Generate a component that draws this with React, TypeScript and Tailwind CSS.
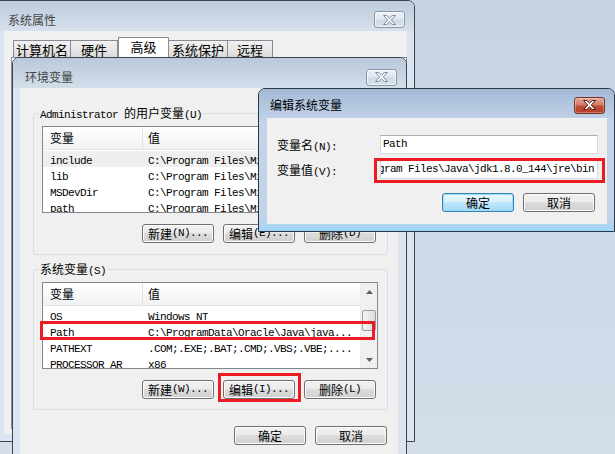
import React from "react";

const CJK_RE = /([\u3000-\u9fff\uff00-\uffef]+)/;

// mixed text: CJK glyphs at 12px, ASCII in a 6px-advance mono like SimSun
function T({ text }: { text: string }) {
  const parts = text.split(CJK_RE).filter((p) => p !== "");
  return (
    <>
      {parts.map((p, i) =>
        CJK_RE.test(p) ? (
          <span key={i} className="font-['Noto_Sans_CJK_SC',sans-serif] text-[12px]">
            {p}
          </span>
        ) : (
          <span key={i} className="whitespace-pre font-['Liberation_Mono',monospace] text-[11px] tracking-[-0.6px]">
            {p}
          </span>
        )
      )}
    </>
  );
}

function XGlyph({ active }: { active?: boolean }) {
  return (
    <svg width="13" height="10" viewBox="0 0 13 10" aria-hidden="true">
      <path
        d="M0.5 0.5h3.2l2.8 2.6 2.8-2.6h3.2l-4.2 4.5 4.2 4.5h-3.2l-2.8-2.6-2.8 2.6H0.5l4.2-4.5z"
        fill={active ? "#ffffff" : "#f3f6fa"}
        stroke={active ? "#4b1a12" : "#7d8da3"}
        strokeWidth="1"
        strokeLinejoin="round"
      />
    </svg>
  );
}

function CloseBtn({ active }: { active?: boolean }) {
  return (
    <div
      className={
        active
          ? "flex h-[17px] w-[31px] items-center justify-center rounded-[3px] border border-[#7a3328] bg-[linear-gradient(#e6a797,#d27c68_45%,#c24b34_55%,#b83f28)] shadow-[inset_0_0_0_1px_rgba(255,255,255,0.3)]"
          : "flex h-[17px] w-[31px] items-center justify-center rounded-[3px] border border-[#8997ab] bg-[linear-gradient(#eef2f7,#e0e7ef_45%,#d0dae6_55%,#d9e2ec)] shadow-[inset_0_0_0_1px_rgba(255,255,255,0.6)]"
      }
    >
      <XGlyph active={active} />
    </div>
  );
}

function Btn({ label, primary }: { label: string; primary?: boolean }) {
  return (
    <div
      className={
        primary
          ? "flex h-[19px] w-[72px] items-center justify-center rounded-[3px] border border-[#3c7fb1] bg-[linear-gradient(#eaf6fd,#d9f0fc_49%,#bee6fd_50%,#a7d9f5)] leading-none text-black shadow-[inset_0_0_0_1px_#8fe0f8]"
          : "flex h-[19px] w-[72px] items-center justify-center rounded-[3px] border border-[#707070] bg-[linear-gradient(#f2f2f2,#ebebeb_49%,#dddddd_50%,#cfcfcf)] leading-none text-black shadow-[inset_0_0_0_1px_#fcfcfc]"
      }
    >
      <T text={label} />
    </div>
  );
}

function ScrollBar() {
  return (
    <div className="flex w-[17px] shrink-0 flex-col border-l border-[#ececec] bg-[#f0f0f0]">
      <div className="flex h-[17px] items-center justify-center">
        <svg width="7" height="4" viewBox="0 0 7 4" aria-hidden="true">
          <path d="M3.5 0L7 4H0z" fill="#606060" />
        </svg>
      </div>
      <div className="flex-1 pt-[10px]">
        <div className="mx-[1px] h-[21px] rounded-[2px] border border-[#9b9b9b] bg-linear-to-r from-[#f4f4f4] to-[#dcdcdc]" />
      </div>
      <div className="flex h-[17px] items-center justify-center">
        <svg width="7" height="4" viewBox="0 0 7 4" aria-hidden="true">
          <path d="M0 0H7L3.5 4z" fill="#606060" />
        </svg>
      </div>
    </div>
  );
}

function ListView({ rows, firstSel, scroll }: { rows: [string, string][]; firstSel?: boolean; scroll?: boolean }) {
  return (
    <div className="flex h-[87px] w-[336px] overflow-hidden border border-[#828790] bg-white text-black">
      <div className="min-w-0 flex-1">
        <div className="flex h-[23px] items-center border-b border-[#e5e5e5] bg-linear-to-b from-white to-[#f1f2f4] font-['Noto_Sans_CJK_SC',sans-serif] text-[12px]">
          <div className="flex h-full w-[100px] items-center border-r border-[#e3e3e3] pl-[7px]">变量</div>
          <div className="pl-[5px]">值</div>
        </div>
        <div className="pt-[1px]">
          {rows.map(([n, v], i) => (
            <div
              key={n}
              className={
                firstSel && i === 0
                  ? "flex h-[16px] items-center whitespace-nowrap bg-[#efefef] leading-[16px]"
                  : "flex h-[16px] items-center whitespace-nowrap leading-[16px]"
              }
            >
              <div className="w-[105px] shrink-0 pl-[7px]">
                <T text={n} />
              </div>
              <div className="overflow-hidden">
                <T text={v} />
              </div>
            </div>
          ))}
        </div>
      </div>
      {scroll && <ScrollBar />}
    </div>
  );
}

function Group({ label, children, className }: { label: string; children: React.ReactNode; className: string }) {
  return (
    <div className={className}>
      <div className="absolute left-[5px] top-[-10px] whitespace-nowrap bg-[#f0f0f0] px-[1px] leading-[16px] text-black">
        <T text={label} />
      </div>
      {children}
    </div>
  );
}

const userVars: [string, string][] = [
  ["include", "C:\\Program Files\\Microsoft Visual Studio\\VC98\\include"],
  ["lib", "C:\\Program Files\\Microsoft Visual Studio\\VC98\\lib"],
  ["MSDevDir", "C:\\Program Files\\Microsoft Visual Studio\\Common"],
  ["path", "C:\\Program Files\\Microsoft Visual Studio\\Common"],
];

const sysVars: [string, string][] = [
  ["OS", "Windows NT"],
  ["Path", "C:\\ProgramData\\Oracle\\Java\\java..."],
  ["PATHEXT", ".COM;.EXE;.BAT;.CMD;.VBS;.VBE;...."],
  ["PROCESSOR_AR", "x86"],
];

const tabs = [
  { name: "计算机名", w: "w-[58px]" },
  { name: "硬件", w: "w-[47px]" },
  { name: "高级", w: "w-[51px]", sel: true },
  { name: "系统保护", w: "w-[59px]" },
  { name: "远程", w: "w-[45px]" },
];

export default function App() {
  return (
    <div className="relative h-[454px] w-[615px] overflow-hidden bg-linear-to-b from-[#c8d2e1] to-[#d4ddea]">
      {/* 系统属性 */}
      <div className="absolute left-[-4px] top-0 h-[442px] w-[419px] rounded-tr-[7px] border border-[#3d4450] bg-[#dbe5f1]">
        <div className="flex h-[30px] items-center justify-between rounded-tr-[6px] bg-linear-to-b from-[#bccad9] to-[#d7e1ed] pl-[11px] pr-[9px] pt-[7px]">
          <span className="font-['Noto_Sans_CJK_SC',sans-serif] text-[12px] leading-none text-[#444]">系统属性</span>
          <CloseBtn />
        </div>
        <div className="mx-[7px] h-[403px] bg-[#f0f0f0] pl-[9px] pt-[6px]">
          <div className="flex h-[20px] items-end">
            {tabs.map((t) => (
              <div
                key={t.name}
                className={
                  t.sel
                    ? `flex h-[20px] items-center justify-center border border-b-0 border-[#898c95] bg-white pb-[2px] font-['Noto_Sans_CJK_SC',sans-serif] text-[13px] leading-none text-black ${t.w}`
                    : `flex h-[17px] items-center justify-center border border-b-0 border-l-0 border-[#898c95] bg-linear-to-b from-[#f2f2f2] to-[#dbdbdb] font-['Noto_Sans_CJK_SC',sans-serif] text-[13px] leading-none text-black first:border-l ${t.w}`
                }
              >
                {t.name}
              </div>
            ))}
          </div>
          <div className="ml-[-2px] h-[372px] w-[396px] border border-[#898c95] bg-white" />
        </div>
      </div>

      {/* 环境变量 */}
      <div className="absolute left-[12px] top-[57px] h-[420px] w-[395px] rounded-t-[7px] border border-[#3d4450] bg-[#dbe5f1]">
        <div className="flex h-[30px] items-center justify-between rounded-t-[6px] bg-linear-to-b from-[#bac8d9] to-[#d3deeb] pl-[12px] pr-[9px] pt-[8px]">
          <span className="font-['Noto_Sans_CJK_SC',sans-serif] text-[12px] leading-none text-[#444]">环境变量</span>
          <CloseBtn />
        </div>
        <div className="ml-[7px] mr-[8px] h-[400px] bg-[#f0f0f0] pl-[13px] pt-[25px]">
          <Group label="Administrator 的用户变量(U)" className="relative w-[355px] rounded-[3px] border border-[#d5dfe5] pb-[11px] pl-[8px] pt-[12px]">
            <ListView rows={userVars} firstSel />
            <div className="mt-[11px] flex justify-end gap-[9px] pr-[11px]">
              <Btn label="新建(N)..." />
              <Btn label="编辑(E)..." />
              <Btn label="删除(D)" />
            </div>
          </Group>
          <Group label="系统变量(S)" className="relative mt-[14px] w-[355px] rounded-[3px] border border-[#d5dfe5] pb-[10px] pl-[8px] pt-[12px]">
            <ListView rows={sysVars} scroll />
            <div className="mt-[11px] flex justify-end gap-[9px] pr-[11px]">
              <Btn label="新建(W)..." />
              <Btn label="编辑(I)..." />
              <Btn label="删除(L)" />
            </div>
          </Group>
          <div className="mt-[16px] flex w-[355px] justify-end gap-[9px] pr-[1px]">
            <Btn label="确定" />
            <Btn label="取消" />
          </div>
        </div>
      </div>

      {/* 编辑系统变量 */}
      <div className="absolute left-[258px] top-[88px] h-[144px] w-[357px] rounded-t-[7px] border border-[#2c3644] bg-[linear-gradient(#c3d4ea,#c3d4ea_90%,#9fd6f5)]">
        <div className="flex h-[29px] items-center justify-between rounded-t-[6px] bg-linear-to-b from-[#a3b9d4] to-[#bfd1e7] pl-[11px] pr-[9px] pt-[3px]">
          <span className="font-['Noto_Sans_CJK_SC',sans-serif] text-[12px] leading-none text-black">编辑系统变量</span>
          <CloseBtn active />
        </div>
        <div className="ml-[8px] mr-[7px] h-[106px] bg-[#f0f0f0] pl-[10px] pt-[17px] text-black">
          <div className="flex h-[19px] items-center">
            <div className="w-[103px] leading-none">
              <T text="变量名(N):" />
            </div>
            <div className="flex h-[19px] w-[218px] items-center border border-[#d3d8df] border-t-[#abadb3] bg-white pl-[2px] leading-none">
              <T text="Path" />
            </div>
          </div>
          <div className="mt-[6px] flex h-[19px] items-center">
            <div className="w-[103px] leading-none">
              <T text="变量值(V):" />
            </div>
            <div className="flex h-[19px] w-[218px] items-center justify-end overflow-hidden whitespace-nowrap border border-[#d3d8df] border-t-[#abadb3] bg-white pr-[3px] leading-none">
              <T text="C:\Program Files\Java\jdk1.8.0_144\jre\bin" />
            </div>
          </div>
          <div className="mt-[14px] flex justify-end gap-[9px] pr-[12px]">
            <Btn label="确定" primary />
            <Btn label="取消" />
          </div>
        </div>
      </div>

      {/* red annotation boxes */}
      <div className="absolute left-[40px] top-[321px] h-[19px] w-[335px] border-[3px] border-[#ed1c24]" />
      <div className="absolute left-[218px] top-[373px] h-[29px] w-[83px] border-[3px] border-[#ed1c24]" />
      <div className="absolute left-[374px] top-[158px] h-[25px] w-[231px] border-[3px] border-[#ed1c24]" />
    </div>
  );
}
